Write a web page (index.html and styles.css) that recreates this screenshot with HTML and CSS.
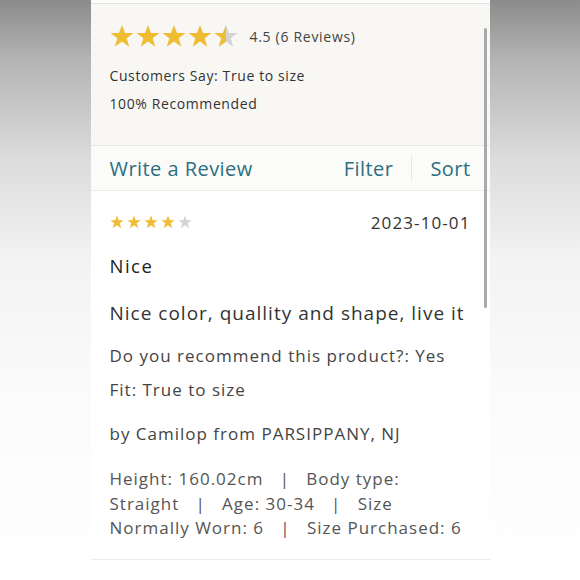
FILE: index.html
```html
<!DOCTYPE html>
<html>
<head>
<meta charset="utf-8">
<link rel="stylesheet" href="styles.css">
</head>
<body>
<div class="panel">
  <div class="top-strip"></div>
  <section class="summary">
    <div class="rating-row">
      <div class="stars big">
        <svg viewBox="0 0 24 24"><polygon class="on" points="12,1 15,9 23.5,9 16.7,14.2 19.2,22.8 12,17.6 4.8,22.8 7.3,14.2 0.5,9 9,9"/></svg>
        <svg viewBox="0 0 24 24"><polygon class="on" points="12,1 15,9 23.5,9 16.7,14.2 19.2,22.8 12,17.6 4.8,22.8 7.3,14.2 0.5,9 9,9"/></svg>
        <svg viewBox="0 0 24 24"><polygon class="on" points="12,1 15,9 23.5,9 16.7,14.2 19.2,22.8 12,17.6 4.8,22.8 7.3,14.2 0.5,9 9,9"/></svg>
        <svg viewBox="0 0 24 24"><polygon class="on" points="12,1 15,9 23.5,9 16.7,14.2 19.2,22.8 12,17.6 4.8,22.8 7.3,14.2 0.5,9 9,9"/></svg>
        <svg viewBox="0 0 24 24"><polygon class="off" points="12,1 15,9 23.5,9 16.7,14.2 19.2,22.8 12,17.6 4.8,22.8 7.3,14.2 0.5,9 9,9"/><polygon class="on" points="12,1 12,17.6 4.8,22.8 7.3,14.2 0.5,9 9,9"/></svg>
      </div>
      <span class="score">4.5 (6 Reviews)</span>
    </div>
    <p class="summary-line">Customers Say: True to size</p>
    <p class="summary-line">100% Recommended</p>
  </section>
  <nav class="actions">
    <span class="link">Write a Review</span>
    <div class="right-links">
      <span class="link">Filter</span>
      <span class="divider"></span>
      <span class="link">Sort</span>
    </div>
  </nav>
  <article class="review">
    <div class="review-head">
      <div class="stars small">
        <svg viewBox="0 0 24 24"><polygon class="on" points="12,1 15,9 23.5,9 16.7,14.2 19.2,22.8 12,17.6 4.8,22.8 7.3,14.2 0.5,9 9,9"/></svg>
        <svg viewBox="0 0 24 24"><polygon class="on" points="12,1 15,9 23.5,9 16.7,14.2 19.2,22.8 12,17.6 4.8,22.8 7.3,14.2 0.5,9 9,9"/></svg>
        <svg viewBox="0 0 24 24"><polygon class="on" points="12,1 15,9 23.5,9 16.7,14.2 19.2,22.8 12,17.6 4.8,22.8 7.3,14.2 0.5,9 9,9"/></svg>
        <svg viewBox="0 0 24 24"><polygon class="on" points="12,1 15,9 23.5,9 16.7,14.2 19.2,22.8 12,17.6 4.8,22.8 7.3,14.2 0.5,9 9,9"/></svg>
        <svg viewBox="0 0 24 24"><polygon class="off" points="12,1 15,9 23.5,9 16.7,14.2 19.2,22.8 12,17.6 4.8,22.8 7.3,14.2 0.5,9 9,9"/></svg>
      </div>
      <span class="date">2023-10-01</span>
    </div>
    <h3 class="title">Nice</h3>
    <p class="body">Nice color, quallity and shape, live it</p>
    <p class="meta">Do you recommend this product?: Yes</p>
    <p class="meta fit">Fit: True to size</p>
    <p class="meta author">by Camilop from PARSIPPANY, NJ</p>
    <p class="details">Height: 160.02cm &nbsp; | &nbsp; Body type: Straight &nbsp; | &nbsp; Age: 30-34 &nbsp; | &nbsp; Size Normally Worn: 6 &nbsp; | &nbsp; Size Purchased: 6</p>
  </article>
  <div class="rest"></div>
  <div class="scrollbar"></div>
</div>
</body>
</html>
```
FILE: styles.css
```css
html, body {
  margin: 0;
  padding: 0;
  height: 580px;
  overflow: hidden;
}
body {
  background: linear-gradient(180deg, #8b8b8b 0px, #b4b4b4 60px, #dcdcdc 160px, #f3f3f3 260px, #fbfbfb 400px, #ffffff 580px);
  font-family: "Open Sans", "Lato", sans-serif;
  display: flex;
  justify-content: center;
}
.panel {
  position: relative;
  width: 399px;
  height: 580px;
  background: #fff;
  display: flex;
  flex-direction: column;
}
.top-strip {
  height: 3px;
  background: #fdfdfd;
  border-bottom: 1px solid #e3e3e1;
}
.summary {
  background: #f8f7f3;
  height: 141px;
  box-sizing: border-box;
  padding: 20px 19px 0;
}
.rating-row {
  display: flex;
  align-items: center;
  gap: 12px;
}
.stars {
  display: flex;
}
.stars svg { display: block; }
.stars.big { gap: 2px; }
.stars.big svg { width: 24px; height: 24px; }
.stars.small { gap: 3px; }
.stars.small svg { width: 14px; height: 14px; }
.on { fill: #eebd34; }
.off { fill: #d4d4d2; }
.score {
  font-size: 14px;
  color: #444;
  letter-spacing: 0.7px;
}
.summary-line {
  margin: 0;
  font-size: 14px;
  color: #333;
  letter-spacing: 0.6px;
  line-height: 28px;
}
.rating-row + .summary-line { margin-top: 14px; }
.actions {
  height: 44px;
  background: #fbfbf9;
  border-top: 1px solid #e9e9e6;
  border-bottom: 1px solid #ececea;
  display: flex;
  align-items: center;
  justify-content: space-between;
  padding: 0 19px 0 19px;
  box-sizing: content-box;
}
.link {
  font-size: 20px;
  color: #2b6f80;
  letter-spacing: 0.45px;
}
.right-links {
  display: flex;
  align-items: center;
  gap: 18px;
}
.divider {
  width: 1px;
  height: 24px;
  background: #e6e6e3;
}
.review {
  background: #fff;
  padding: 18px 19px 0 19px;
  height: 369px;
  box-sizing: border-box;
  border-bottom: 1px solid #ebebea;
  color: #333;
}
.review-head {
  display: flex;
  align-items: center;
  justify-content: space-between;
  height: 26px;
}
.date {
  font-size: 17px;
  color: #333;
  letter-spacing: 1.1px;
}
.title {
  margin: 18px 0 0;
  font-size: 18.5px;
  font-weight: 500;
  line-height: 26px;
  letter-spacing: 1.5px;
  color: #222;
}
.body {
  margin: 21px 0 0;
  font-size: 19px;
  line-height: 26px;
  letter-spacing: 1px;
  color: #333;
}
.meta {
  margin: 18px 0 0;
  font-size: 17px;
  line-height: 24px;
  letter-spacing: 1px;
  color: #444;
}
.meta.fit { margin-top: 10px; }
.meta.author { margin-top: 20px; }
.details {
  margin: 21px 0 0;
  font-size: 17px;
  line-height: 24.5px;
  letter-spacing: 1px;
  color: #555;
}
.rest {
  flex: 1;
  background: #fff;
}
.scrollbar {
  position: absolute;
  left: 393px;
  top: 28px;
  width: 3px;
  height: 280px;
  border-radius: 2px;
  background: #a9a9a9;
}
```
